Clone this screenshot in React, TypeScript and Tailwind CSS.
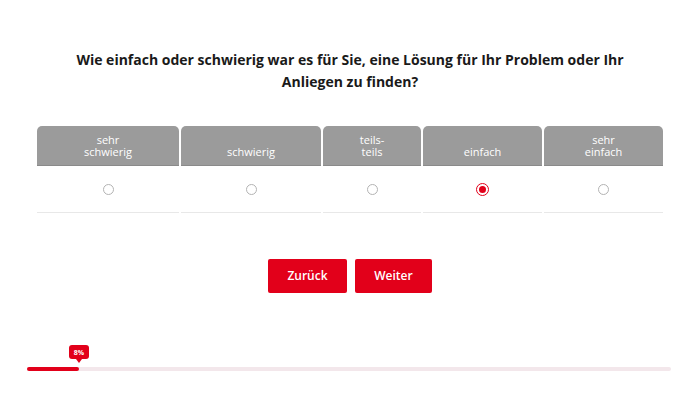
import { useState } from "react"

const options = [
  { label: ["sehr", "schwierig"] },
  { label: ["schwierig"] },
  { label: ["teils-", "teils"] },
  { label: ["einfach"] },
  { label: ["sehr", "einfach"] },
]

function Radio({ checked, onClick }: { checked: boolean; onClick: () => void }) {
  if (checked) {
    return (
      <button
        onClick={onClick}
        className="flex h-[13px] w-[13px] items-center justify-center rounded-full border border-[#e2001a] bg-white"
      >
        <span className="h-[7px] w-[7px] rounded-full bg-[#e2001a]" />
      </button>
    )
  }
  return (
    <button
      onClick={onClick}
      className="h-[11px] w-[11px] rounded-full border border-[#b3b3b3] bg-white"
    />
  )
}

export default function App() {
  const [selected, setSelected] = useState(3)

  return (
    <div className="h-[400px] w-[700px] bg-white font-['Open_Sans',sans-serif]">
      <h1 className="pt-[49px] text-center text-[14px] font-bold leading-[22px] text-[#1a1a1a]">
        Wie einfach oder schwierig war es für Sie, eine Lösung für Ihr Problem oder Ihr
        <br />
        Anliegen zu finden?
      </h1>

      <div className="ml-[37px] mt-[33px] grid w-[626px] grid-cols-[142px_140px_98px_119px_119px] gap-x-[2px]">
        {options.map((o, i) => (
          <div
            key={i}
            className="flex h-[40px] flex-col items-center justify-end rounded-t-[5px] border-b border-[#8a8a8a] bg-[#9b9b9b] pb-[7px] text-[11px] leading-[12px] text-white"
          >
            {o.label.map((l) => (
              <span key={l}>{l}</span>
            ))}
          </div>
        ))}
        {options.map((_, i) => (
          <div
            key={"r" + i}
            className="flex h-[47px] items-center justify-center border-b border-[#e8e8e8] pt-[1px]"
          >
            <Radio checked={selected === i} onClick={() => setSelected(i)} />
          </div>
        ))}
      </div>

      <div className="mt-[46px] flex justify-center gap-[8px]">
        <button className="h-[34px] w-[79px] rounded-[2px] bg-[#e2001a] text-[12px] font-semibold text-white">
          Zurück
        </button>
        <button className="h-[34px] w-[77px] rounded-[2px] bg-[#e2001a] text-[12px] font-semibold text-white">
          Weiter
        </button>
      </div>

      <div className="relative ml-[27px] mt-[74px] h-[4px] w-[644px] rounded-full bg-[#f3e7eb]">
        <div className="h-[4px] w-[52px] rounded-full bg-[#e2001a]" />
        <div className="absolute bottom-[8px] left-[42px] flex flex-col items-center">
          <div className="flex h-[14px] w-[20px] items-center justify-center rounded-[3px] bg-[#e2001a] text-[7px] font-bold leading-none text-white">
            8%
          </div>
          <div className="h-0 w-0 border-x-[3px] border-t-[4px] border-x-transparent border-t-[#e2001a]" />
        </div>
      </div>
    </div>
  )
}
